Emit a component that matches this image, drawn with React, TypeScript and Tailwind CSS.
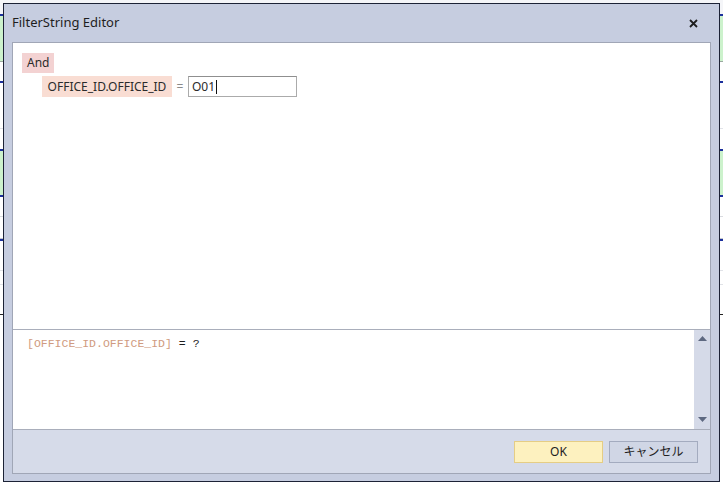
import React from 'react';

const uiFont = { fontFamily: '"Noto Sans", "Noto Sans CJK JP", sans-serif' };

function BackgroundGrid() {
    // the grid of the app behind the dialog; only a thin strip of it shows
    return (
        <div className="flex flex-col w-full">
            <div className="h-[14px] bg-[#f4f5f8]" />
            <div className="h-[2px] bg-[#1b2f9c]" />
            <div className="h-[46px] bg-[#ccf2cc] border-b border-[#9aa9a0]" />
            <div className="h-[19px] bg-white" />
            <div className="h-[2px] bg-[#1b2f9c]" />
            <div className="h-[46px] bg-white border-b border-[#e1e3e8]" />
            <div className="h-[20px] bg-white" />
            <div className="h-[2px] bg-[#1b2f9c]" />
            <div className="h-[44px] bg-[#ccf2cc]" />
            <div className="h-[2px] bg-[#1b2f9c]" />
            <div className="h-[20px] bg-white border-b border-[#d9dbe0]" />
            <div className="h-[22px] bg-white border-b border-[#c3c6cc]" />
            <div className="h-[2px] bg-[#1b2f9c]" />
            <div className="h-[30px] bg-white border-b border-[#e1e3e8]" />
            <div className="h-[14px] bg-white border-b border-[#e1e3e8]" />
            <div className="h-[30px] bg-white border-b border-[#222]" />
            <div className="h-[12px] bg-white" />
            <div className="flex-1 h-[160px] bg-[#d6dbe9]" />
        </div>
    );
}

function CloseIcon() {
    return (
        <svg width="9" height="9" viewBox="0 0 9 9">
            <path d="M1 1 L8 8 M8 1 L1 8" stroke="#1e1e1e" strokeWidth="1.8" />
        </svg>
    );
}

function Arrow({ up }: { up: boolean }) {
    return (
        <svg width="9" height="5" viewBox="0 0 9 5">
            <path d={up ? 'M0 5 L4.5 0 L9 5 Z' : 'M0 0 L4.5 5 L9 0 Z'} fill="#5d6880" />
        </svg>
    );
}

export default function App() {
    return (
        <div className="relative w-[723px] h-[485px] overflow-hidden bg-white">
            <BackgroundGrid />

            {/* dialog window */}
            <div
                className="absolute left-[3px] top-[3px] w-[717px] h-[479px] border border-[#1c2236] bg-[#c6cde0] flex flex-col"
                style={uiFont}
            >
                <div className="h-[38px] flex items-center justify-between pl-[8px] pr-[21px]">
                    <span className="text-[13px] text-[#1e1e1e]">FilterString Editor</span>
                    <CloseIcon />
                </div>

                <div className="flex-1 mx-[8px] mb-[7px] border border-[#a0a6b6] flex flex-col">
                    {/* filter tree */}
                    <div className="h-[286px] bg-white pt-[10px] pl-[9px] text-[12px] text-[#2b2b2b]">
                        <div className="flex">
                            <span className="h-[20px] px-[5px] flex items-center bg-[#f3d2d2]">And</span>
                        </div>
                        <div className="flex items-center mt-[3px] ml-[20px]">
                            <span className="h-[21px] w-[130px] flex items-center justify-center bg-[#f9ddd3]">
                                OFFICE_ID.OFFICE_ID
                            </span>
                            <span className="w-[16px] text-center text-[#8a8a8a]">=</span>
                            <div className="h-[21px] w-[109px] border border-[#ababab] border-t-[#8f8f8f] flex items-center pl-[3px]">
                                <span>O01</span>
                                <span className="w-px h-[14px] bg-[#111] ml-px" />
                            </div>
                        </div>
                    </div>

                    {/* expression text */}
                    <div className="h-[100px] border-t border-[#a9aebb] flex">
                        <div
                            className="flex-1 bg-white pt-[5px] pl-[14px] text-[11.5px] whitespace-pre"
                            style={{ fontFamily: '"Liberation Mono", monospace' }}
                        >
                            <span className="text-[#d09b80]">[OFFICE_ID.OFFICE_ID]</span>
                            <span className="text-[#1e1e1e]"> = ?</span>
                        </div>
                        <div className="w-[16px] bg-[#d5dae8] flex flex-col items-center justify-between pt-[6px] pb-[7px]">
                            <Arrow up />
                            <Arrow up={false} />
                        </div>
                    </div>

                    {/* buttons */}
                    <div className="flex-1 border-t border-[#a9aebb] bg-[#d6dbe9] flex items-center justify-end gap-[6px] pr-[12px]">
                        <button className="w-[89px] h-[22px] bg-[#fdf1bf] border border-[#e5cd85] text-[12px] text-[#1e1e1e]">
                            OK
                        </button>
                        <button className="w-[89px] h-[22px] bg-[#d0d6e5] border border-[#a3abbf] text-[12px] text-[#1e1e1e]">
                            キャンセル
                        </button>
                    </div>
                </div>
            </div>
        </div>
    );
}
